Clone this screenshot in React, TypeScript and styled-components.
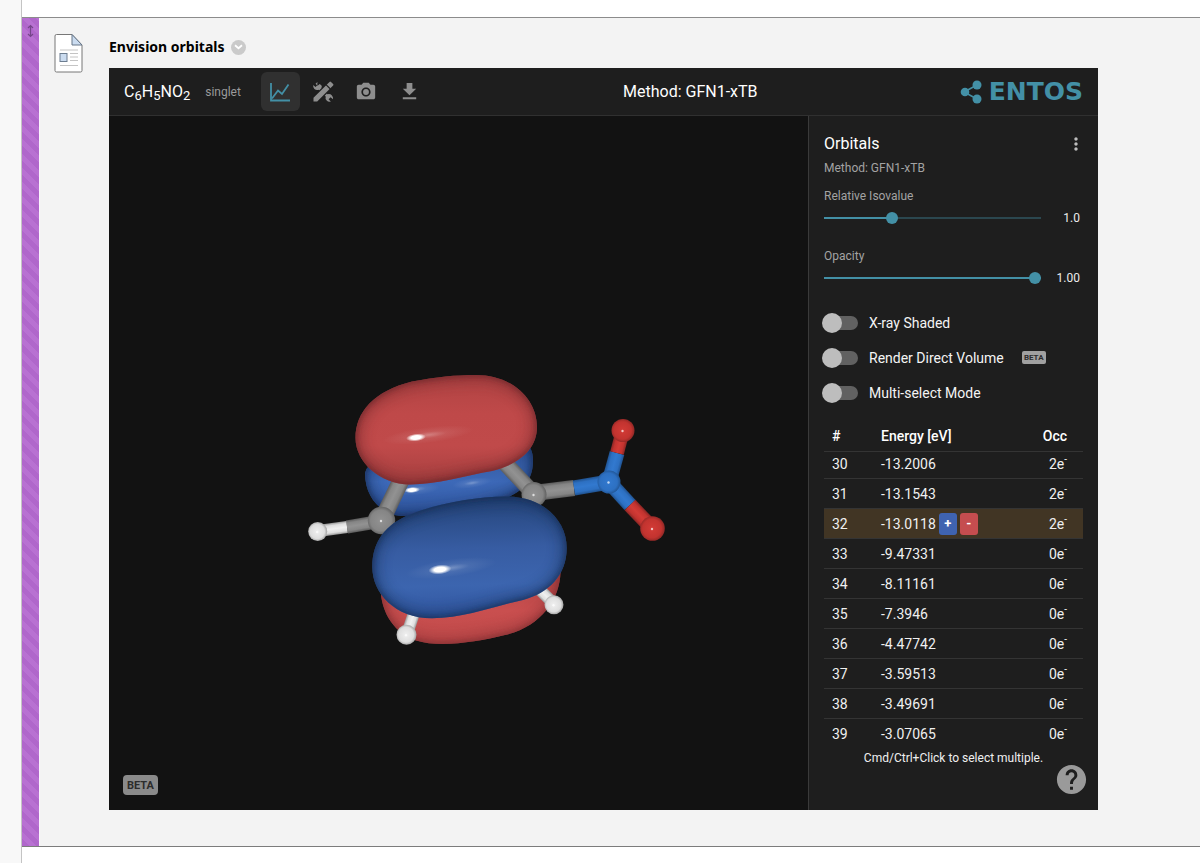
import React, { useState } from "react";
import styled, { createGlobalStyle } from "styled-components";
import { MdHelp, MdMoreVert, MdPhotoCamera, MdGetApp } from "react-icons/md";

const teal = "#4390a6";

const GlobalStyle = createGlobalStyle`
  *, *::before, *::after { box-sizing: border-box; }
  body { margin: 0; background: #fff; font-family: Roboto, "Liberation Sans", sans-serif; }
  button { font: inherit; border: 0; padding: 0; cursor: pointer; }
  h1, h2, p { margin: 0; }
`;

const Page = styled.div`
  display: flex;
  min-height: 100vh;
`;

const Gutter = styled.aside`
  flex: none;
  width: 22px;
  background: #f8f8f8;
  border-right: 1px solid #c4c4c4;
`;

const Notebook = styled.main`
  flex: 1;
  min-width: 0;
  padding: 17px 0 16px;
`;

const Entry = styled.article`
  display: flex;
  background: #f3f3f3;
  border-top: 1px solid #8c8c8c;
  border-bottom: 1px solid #7c7c7c;
`;

const DragHandle = styled.div`
  flex: none;
  width: 18px;
  padding: 6px 4px;
  border-right: 1px solid #fbf4fd;
  background: repeating-linear-gradient(45deg, #b067cb 0 5px, #b871d2 5px 10px);
  svg { display: block; }
`;

const EntryIcon = styled.div`
  flex: none;
  padding: 15px 26px 0 14px;
  svg { display: block; }
`;

const EntryBody = styled.section`
  flex: 1;
  min-width: 0;
  padding: 17px 102px 36px 0;
`;

const EntryHeader = styled.header`
  display: flex;
  align-items: center;
  gap: 6px;
  height: 24px;
  margin-bottom: 9px;
`;

const EntryTitle = styled.h1`
  font: 700 14px/24px "Noto Sans", "Open Sans", sans-serif;
  color: #000;
`;

const CollapseButton = styled.button`
  display: grid;
  place-items: center;
  width: 15px;
  height: 15px;
  border-radius: 50%;
  background: #cacaca;
`;

const App3D = styled.div`
  background: #1e1e1e;
  color: #fff;
`;

const Toolbar = styled.header`
  display: flex;
  align-items: center;
  justify-content: space-between;
  height: 48px;
  padding: 0 15px;
  border-bottom: 1px solid #303030;
`;

const ToolbarGroup = styled.div`
  display: flex;
  align-items: center;
`;

const Formula = styled.span`
  font-size: 16px;
  line-height: 24px;
  margin-right: 15px;
  sub { font-size: 13px; line-height: 0; vertical-align: -3px; }
`;

const SpinState = styled.span`
  font-size: 12px;
  color: #9a9a9a;
  margin-right: 20px;
`;

const Tools = styled.div`
  display: flex;
  gap: 4px;
`;

const ToolButton = styled.button<{ $active?: boolean }>`
  display: grid;
  place-items: center;
  width: 39px;
  height: 39px;
  border-radius: 6px;
  color: ${(p) => (p.$active ? teal : "#8e8e8e")};
  background: ${(p) => (p.$active ? "#303030" : "transparent")};
`;

const MethodTitle = styled.h2`
  margin-right: 8px;
  font-size: 16px;
  font-weight: 400;
  line-height: 24px;
`;

const Brand = styled.a`
  display: flex;
  align-items: center;
  gap: 7px;
  color: ${teal};
  text-decoration: none;
  font: 700 25px/24px "DejaVu Sans", sans-serif;
`;

const Workspace = styled.div`
  display: flex;
`;

const Viewport = styled.div`
  position: relative;
  flex: 1;
  min-width: 0;
  background: #121212;
`;

const Scene = styled.svg`
  display: block;
  width: 100%;
  height: 100%;
`;

const BetaBadge = styled.span<{ $large?: boolean }>`
  display: grid;
  place-items: center;
  width: ${(p) => (p.$large ? 35 : 24)}px;
  height: ${(p) => (p.$large ? 20 : 13)}px;
  border-radius: ${(p) => (p.$large ? 4 : 2)}px;
  background: ${(p) => (p.$large ? "#8a8a8a" : "#a0a0a0")};
  color: #2c2c2c;
  font-size: ${(p) => (p.$large ? 11 : 8)}px;
  font-weight: 700;
`;

const ViewportBadge = styled.div`
  position: absolute;
  left: 14px;
  bottom: 15px;
`;

const Sidebar = styled.aside`
  position: relative;
  flex: none;
  width: 290px;
  padding: 16px 15px 42px;
  border-left: 1px solid #3a3a3a;
`;

const SidebarHeader = styled.header`
  display: flex;
  align-items: center;
  justify-content: space-between;
`;

const PanelTitle = styled.h2`
  font-size: 16px;
  font-weight: 400;
  line-height: 24px;
`;

const MenuButton = styled.button`
  display: grid;
  place-items: center;
  width: 20px;
  height: 24px;
  margin-right: -3px;
  background: none;
  color: #bdbdbd;
`;

const Muted = styled.p`
  margin-top: 2px;
  font-size: 12px;
  line-height: 20px;
  color: #a3a3a3;
`;

const Sliders = styled.div`
  display: grid;
  gap: 16px;
  margin: 8px 0 15px;
`;

const SliderLabel = styled.label`
  display: block;
  font-size: 12px;
  line-height: 20px;
  color: #a3a3a3;
`;

const SliderRow = styled.div`
  display: flex;
  align-items: center;
  height: 24px;
  padding-right: 3px;
`;

const Range = styled.input`
  appearance: none;
  flex: 1;
  min-width: 0;
  height: 12px;
  margin: 0;
  background: linear-gradient(${teal}, ${teal}) 0 50% / var(--fill) 2px no-repeat,
    linear-gradient(#2b474f, #2b474f) 0 50% / 100% 2px no-repeat;
  &::-webkit-slider-thumb {
    appearance: none;
    width: 12px;
    height: 12px;
    border-radius: 50%;
    background: ${teal};
  }
`;

const SliderValue = styled.output`
  width: 39px;
  font-size: 12px;
  line-height: 20px;
  text-align: right;
  color: #ececec;
`;

const SwitchRow = styled.label`
  display: flex;
  align-items: center;
  height: 35px;
  font-size: 14px;
  color: #f4f4f4;
`;

const Switch = styled.input`
  appearance: none;
  position: relative;
  flex: none;
  width: 34px;
  height: 14px;
  margin: 0 11px 0 0;
  border-radius: 7px;
  background: #616161;
  &::before {
    content: "";
    position: absolute;
    top: -3px;
    left: -2px;
    width: 20px;
    height: 20px;
    border-radius: 50%;
    background: #bdbdbd;
  }
  &:checked { background: #2b5f6d; }
  &:checked::before { left: 16px; background: ${teal}; }
`;

const SwitchText = styled.span`
  margin-right: 18px;
`;

const TableScroll = styled.div`
  height: 323px;
  margin-top: 11px;
  overflow: hidden;
`;

const OrbitalTable = styled.table`
  width: 100%;
  border-collapse: separate;
  border-spacing: 0;
  font-size: 14px;
  line-height: 18px;
  color: #f0f0f0;
  th, td {
    padding: 0 8px 5px;
    text-align: left;
    vertical-align: bottom;
    border-bottom: 1px solid #343434;
  }
  th { height: 31px; padding-bottom: 6px; font-weight: 500; color: #fff; }
  th:first-child { width: 49px; }
  th:last-child, td:last-child { text-align: right; padding-right: 16px; }
  sup { font-size: 10px; line-height: 0; }
`;

const OrbitalRow = styled.tr<{ $selected: boolean }>`
  height: 30px;
  background: ${(p) => (p.$selected ? "#413524" : "transparent")};
  &:first-child { height: 27px; }
`;

const EnergyCell = styled.div`
  display: flex;
  align-items: center;
  gap: 3px;
  height: 18px;
`;

const PhaseButton = styled.button<{ $color: string }>`
  flex: none;
  width: 18px;
  height: 22px;
  border-radius: 3px;
  background: ${(p) => p.$color};
  color: #fff;
  font-size: 13px;
  font-weight: 700;
  line-height: 20px;
`;

const Hint = styled.p`
  margin-top: 4px;
  font-size: 12px;
  line-height: 20px;
  text-align: center;
  color: #f0f0f0;
`;

const HelpButton = styled.button`
  position: absolute;
  right: 9px;
  bottom: 13px;
  width: 35px;
  height: 35px;
  background: none;
  color: #9a9a9a;
  svg { display: block; }
`;

const ORBITALS = [
  { n: 30, energy: "-13.2006", occ: 2 },
  { n: 31, energy: "-13.1543", occ: 2 },
  { n: 32, energy: "-13.0118", occ: 2 },
  { n: 33, energy: "-9.47331", occ: 0 },
  { n: 34, energy: "-8.11161", occ: 0 },
  { n: 35, energy: "-7.3946", occ: 0 },
  { n: 36, energy: "-4.47742", occ: 0 },
  { n: 37, energy: "-3.59513", occ: 0 },
  { n: 38, energy: "-3.49691", occ: 0 },
  { n: 39, energy: "-3.07065", occ: 0 },
];

function DocumentIcon() {
  return (
    <svg width="29" height="40" viewBox="0 0 29 40" aria-hidden="true">
      <path d="M2.500 1.500H18L28 12v25.500q0 1.500-1.500 1.500h-24Q1 39 1 37.500V3Q1 1.500 2.500 1.500Z" fill="#fff" stroke="#777" />
      <path d="M18 1.500V12H28Z" fill="#cbdcf0" stroke="#667689" strokeLinejoin="round" />
      <path d="M6 17h18M16 20.500h8M16 24h8M16 27.500h8M6 32.500h18" stroke="#c4c4c4" />
      <rect x="6" y="20.500" width="7" height="8" fill="#cbdcf0" stroke="#6c7d90" />
    </svg>
  );
}

function ChartIcon() {
  return (
    <svg width="22" height="22" viewBox="0 0 22 22" fill="none" stroke="currentColor" strokeWidth="1.800" aria-hidden="true">
      <path d="M2 2v17.500h19" />
      <path d="M3 17.500L9 9.500l4 3.500L19.500 3.500" />
    </svg>
  );
}

function BuildIcon() {
  return (
    <svg width="22" height="22" viewBox="0 0 22 22" fill="currentColor" aria-hidden="true">
      <path d="M5.400 1L3.600 2.800l1.900 2L7.800 3l2.100 2.100-.5 1.500 2 2L9 11 6.700 8.700Q4.300 9.600 2.400 7.900.8 6.300 1.200 4L3.500 5.900 5.300 4.200Z" />
      <path d="M13 10.800l2.500 2.500q2.600-.7 4.200.9Q21.500 16 21 18.200l-2.400-2-2 2 2.200 2.400q-2.400.7-4.100-1-1.700-1.700-1-4.100l-2.500-2.500Z" />
      <path d="M1.500 20.500v-3.700L17.500.9q.7-.7 1.500 0l2.100 2.100q.8.800 0 1.600L5.200 20.500Z" stroke="#1e1e1e" strokeWidth="2.400" paintOrder="stroke" />
      <path d="M14 3.600l4.400 4.400" stroke="#1e1e1e" strokeWidth="1.200" />
    </svg>
  );
}

function BrandMark() {
  return (
    <svg width="22" height="24" viewBox="0 0 22 24" fill="currentColor" aria-hidden="true">
      <path d="M4 12L17 5M4 12l13 7" stroke="currentColor" strokeWidth="1.500" />
      <circle cx="5" cy="12" r="4.300" />
      <circle cx="17" cy="5" r="4.500" />
      <circle cx="17" cy="19" r="4.500" />
    </svg>
  );
}

type Pt = [number, number];

function Bond({ from, to, width, tone }: { from: Pt; to: Pt; width: number; tone: string }) {
  const dx = to[0] - from[0];
  const dy = to[1] - from[1];
  const length = Math.hypot(dx, dy);
  const angle = (Math.atan2(dy, dx) * 180) / Math.PI;
  return (
    <rect
      y={-width / 2}
      width={length}
      height={width}
      fill={`url(#bond-${tone})`}
      transform={`translate(${from[0]} ${from[1]}) rotate(${angle})`}
    />
  );
}

function Atom({ at, r, tone }: { at: Pt; r: number; tone: string }) {
  return (
    <g>
      <circle cx={at[0]} cy={at[1]} r={r} fill={`url(#atom-${tone})`} />
      <circle cx={at[0] - 0.5} cy={at[1] + 0.5} r="1.200" fill="#fff" opacity=".7" />
    </g>
  );
}

/* An isosurface lobe: a lit body whose rim darkens along its own outline. */
function Lobe({ id, d, fill, rim }: { id: string; d: string; fill: string; rim: string }) {
  return (
    <g>
      <clipPath id={`clip-${id}`}><path d={d} /></clipPath>
      <path d={d} fill={fill} />
      <g clipPath={`url(#clip-${id})`}>
        <path d={d} fill="none" stroke={rim} strokeWidth="16" opacity=".36" filter="url(#soft-wide)" />
        <path d={d} fill="none" stroke={rim} strokeWidth="4" opacity=".75" filter="url(#soft)" />
      </g>
    </g>
  );
}

const TONES: Record<string, [string, string, string]> = {
  carbon: ["#929292", "#858585", "#5c5c5c"],
  hydrogen: ["#f0f0f0", "#dedede", "#989898"],
  nitrogen: ["#3279cf", "#2d70c2", "#20528f"],
  oxygen: ["#d33b36", "#c2332f", "#892624"],
};

function Molecule() {
  return (
    <Scene viewBox="109 116 699 694" preserveAspectRatio="xMidYMid slice" role="img" aria-label="Nitrobenzene orbital 32">
      <defs>
        {Object.entries(TONES).map(([name, [light, mid, dark]]) => (
          <React.Fragment key={name}>
            <radialGradient id={`atom-${name}`} cx=".48" cy=".5" r=".54">
              <stop offset="0" stopColor={light} />
              <stop offset=".7" stopColor={mid} />
              <stop offset="1" stopColor={dark} />
            </radialGradient>
            <linearGradient id={`bond-${name}`} x1="0" y1="0" x2="0" y2="1">
              <stop offset="0" stopColor={dark} />
              <stop offset=".2" stopColor={mid} />
              <stop offset=".5" stopColor={light} />
              <stop offset=".8" stopColor={mid} />
              <stop offset="1" stopColor={dark} />
            </linearGradient>
          </React.Fragment>
        ))}
        <filter id="soft" x="-20%" y="-20%" width="140%" height="140%"><feGaussianBlur stdDeviation="2" /></filter>
        <filter id="soft-wide" x="-20%" y="-20%" width="140%" height="140%"><feGaussianBlur stdDeviation="6" /></filter>
        <linearGradient id="lobe-red" x1="0" y1="0" x2="0" y2="1">
          <stop offset="0" stopColor="#b04343" />
          <stop offset=".35" stopColor="#bf4949" />
          <stop offset=".65" stopColor="#c04a4a" />
          <stop offset="1" stopColor="#a53f3f" />
        </linearGradient>
        <linearGradient id="lobe-blue" x1="0" y1="0" x2=".05" y2="1">
          <stop offset="0" stopColor="#213e70" />
          <stop offset=".2" stopColor="#2c4e8a" />
          <stop offset=".45" stopColor="#375ca2" />
          <stop offset=".75" stopColor="#3c65af" />
          <stop offset="1" stopColor="#3156a0" />
        </linearGradient>
        <linearGradient id="lobe-blue-back" x1="0" y1="0" x2="0" y2="1">
          <stop offset="0" stopColor="#2c4f91" />
          <stop offset=".55" stopColor="#3d69b8" />
          <stop offset="1" stopColor="#3056a0" />
        </linearGradient>
        <linearGradient id="lobe-red-back" x1="0" y1="0" x2="0" y2="1">
          <stop offset="0" stopColor="#a84040" />
          <stop offset=".6" stopColor="#c94f4f" />
          <stop offset="1" stopColor="#c04a4a" />
        </linearGradient>
        <radialGradient id="glow">
          <stop offset="0" stopColor="#fff" stopOpacity=".3" />
          <stop offset=".4" stopColor="#fff" stopOpacity=".08" />
          <stop offset="1" stopColor="#fff" stopOpacity="0" />
        </radialGradient>
        <radialGradient id="glint">
          <stop offset="0" stopColor="#fff" />
          <stop offset=".5" stopColor="#fff" />
          <stop offset="1" stopColor="#fff" stopOpacity="0" />
        </radialGradient>
      </defs>

      <Lobe
        id="blue-back"
        d="M365 473C365 500 384 515 401 516C440 514 476 510 506 498C527 490 533 475 533 461C533 451 530 446 524 440L380 460Q366 465 365 473Z"
        fill="url(#lobe-blue-back)"
        rim="#162b54"
      />
      <ellipse cx="416" cy="489" rx="24" ry="6" transform="rotate(-4 416 489)" fill="url(#glow)" />
      <ellipse cx="412" cy="490" rx="8" ry="3" transform="rotate(-4 412 490)" fill="url(#glint)" />
      <ellipse cx="472" cy="483" rx="20" ry="5" transform="rotate(-8 472 483)" fill="url(#glow)" />

      <Bond from={[382, 520]} to={[405, 472]} width={17} tone="carbon" />
      <Bond from={[534, 494]} to={[503, 461]} width={16} tone="carbon" />
      <Bond from={[534, 493]} to={[574, 488]} width={16} tone="carbon" />
      <Bond from={[574, 488]} to={[609, 482]} width={15} tone="nitrogen" />
      <Bond from={[609, 482]} to={[617, 453]} width={15} tone="nitrogen" />
      <Bond from={[617, 453]} to={[623, 430]} width={14} tone="oxygen" />
      <Bond from={[609, 482]} to={[630, 505]} width={15} tone="nitrogen" />
      <Bond from={[630, 505]} to={[652, 528]} width={15} tone="oxygen" />
      <Bond from={[382, 521]} to={[347, 527]} width={13} tone="carbon" />
      <Bond from={[347, 527]} to={[318, 531]} width={12} tone="hydrogen" />
      <Atom at={[381.500, 520.500]} r={13.700} tone="carbon" />
      <Atom at={[534, 494.500]} r={12.500} tone="carbon" />
      <Atom at={[609, 482]} r={11.500} tone="nitrogen" />
      <Atom at={[623, 430.500]} r={11.500} tone="oxygen" />
      <Atom at={[652.500, 528.500]} r={12.300} tone="oxygen" />
      <Atom at={[317.700, 531.500]} r={9.500} tone="hydrogen" />

      <Lobe
        id="red-front"
        d="M355.500 438C355.500 412 374 391 412 381.500C437 377 455 375 476 375C512 375 537 399 537 427C537 449 519 464.500 492 471C466 475.500 436 484.500 410 484.500C380 484.500 355.500 462 355.500 438Z"
        fill="url(#lobe-red)"
        rim="#6a2829"
      />
      <ellipse cx="428" cy="435" rx="46" ry="8" transform="rotate(-7 428 435)" fill="url(#glow)" />
      <ellipse cx="416" cy="437.500" rx="10" ry="3.800" transform="rotate(-6 416 437.500)" fill="url(#glint)" />

      <Lobe
        id="red-back"
        d="M380.500 585C380 614 396 634 416 640.500C440 648 476 642 505 635C540 627 560 600 560.500 572L500 560Z"
        fill="url(#lobe-red-back)"
        rim="#812f30"
      />
      <Bond from={[407, 634]} to={[415, 610]} width={12} tone="hydrogen" />
      <Bond from={[554, 604]} to={[540, 590]} width={12} tone="hydrogen" />
      <Lobe
        id="blue-front"
        d="M372.300 567C372.300 541 386 524 410 514.500C436 504 474 496.500 506 496.500C543 496.500 566.700 520 566.700 548C566.700 575 549 593 523 600C496 605.500 464 618.300 432 618.300C395 618.300 372.300 593 372.300 567Z"
        fill="url(#lobe-blue)"
        rim="#182d54"
      />
      <ellipse cx="451" cy="568" rx="46" ry="9" transform="rotate(-8 451 568)" fill="url(#glow)" />
      <ellipse cx="440" cy="569.500" rx="11.500" ry="4.800" transform="rotate(-6 440 569.500)" fill="url(#glint)" />
      <Atom at={[406.500, 634.700]} r={10} tone="hydrogen" />
      <Atom at={[554, 604.700]} r={9.500} tone="hydrogen" />
    </Scene>
  );
}

interface SliderProps {
  id: string;
  label: string;
  min: number;
  max: number;
  step: number;
  initial: number;
  digits: number;
}

function Slider({ id, label, min, max, step, initial, digits }: SliderProps) {
  const [value, setValue] = useState(initial);
  const fill = `${((value - min) / (max - min)) * 100}%`;
  return (
    <div>
      <SliderLabel htmlFor={id}>{label}</SliderLabel>
      <SliderRow>
        <Range
          id={id}
          type="range"
          min={min}
          max={max}
          step={step}
          value={value}
          onChange={(e) => setValue(Number(e.target.value))}
          style={{ "--fill": fill } as React.CSSProperties}
        />
        <SliderValue htmlFor={id}>{value.toFixed(digits)}</SliderValue>
      </SliderRow>
    </div>
  );
}

function OrbitalsPanel() {
  const [selected, setSelected] = useState(32);
  return (
    <Sidebar>
      <SidebarHeader>
        <PanelTitle>Orbitals</PanelTitle>
        <MenuButton aria-label="More options"><MdMoreVert size={20} /></MenuButton>
      </SidebarHeader>
      <Muted>Method: GFN1-xTB</Muted>
      <Sliders>
        <Slider id="isovalue" label="Relative Isovalue" min={0.1} max={3.1} step={0.1} initial={1} digits={1} />
        <Slider id="opacity" label="Opacity" min={0} max={1} step={0.01} initial={1} digits={2} />
      </Sliders>
      <SwitchRow><Switch type="checkbox" /><SwitchText>X-ray Shaded</SwitchText></SwitchRow>
      <SwitchRow><Switch type="checkbox" /><SwitchText>Render Direct Volume</SwitchText><BetaBadge>BETA</BetaBadge></SwitchRow>
      <SwitchRow><Switch type="checkbox" /><SwitchText>Multi-select Mode</SwitchText></SwitchRow>
      <TableScroll>
        <OrbitalTable>
          <thead>
            <tr><th>#</th><th>Energy [eV]</th><th>Occ</th></tr>
          </thead>
          <tbody>
            {ORBITALS.map((o) => (
              <OrbitalRow key={o.n} $selected={o.n === selected} onClick={() => setSelected(o.n)}>
                <td>{o.n}</td>
                <td>
                  <EnergyCell>
                    {o.energy}
                    {o.n === selected && (
                      <>
                        <PhaseButton $color="#3f63b0" aria-label="Positive phase">+</PhaseButton>
                        <PhaseButton $color="#c54d4f" aria-label="Negative phase">-</PhaseButton>
                      </>
                    )}
                  </EnergyCell>
                </td>
                <td>{o.occ}e<sup>-</sup></td>
              </OrbitalRow>
            ))}
          </tbody>
        </OrbitalTable>
      </TableScroll>
      <Hint>Cmd/Ctrl+Click to select multiple.</Hint>
      <HelpButton aria-label="Help"><MdHelp size={35} /></HelpButton>
    </Sidebar>
  );
}

export default function App() {
  return (
    <Page>
      <GlobalStyle />
      <Gutter />
      <Notebook>
        <Entry>
          <DragHandle>
            <svg width="9" height="14" viewBox="0 0 9 14" fill="none" stroke="#75458a" strokeWidth="1.200" aria-hidden="true">
              <path d="M4.500 1.500v11M2 4l2.500-2.500L7 4M2 10l2.500 2.500L7 10" />
            </svg>
          </DragHandle>
          <EntryIcon><DocumentIcon /></EntryIcon>
          <EntryBody>
            <EntryHeader>
              <EntryTitle>Envision orbitals</EntryTitle>
              <CollapseButton aria-label="Entry options">
                <svg width="9" height="6" viewBox="0 0 9 6" fill="none" stroke="#fff" strokeWidth="1.800" aria-hidden="true">
                  <path d="M1 1.200l3.500 3 3.500-3" />
                </svg>
              </CollapseButton>
            </EntryHeader>
            <App3D>
              <Toolbar>
                <ToolbarGroup>
                  <Formula>C<sub>6</sub>H<sub>5</sub>NO<sub>2</sub></Formula>
                  <SpinState>singlet</SpinState>
                  <Tools>
                    <ToolButton $active aria-label="Analysis"><ChartIcon /></ToolButton>
                    <ToolButton aria-label="Build"><BuildIcon /></ToolButton>
                    <ToolButton aria-label="Take picture"><MdPhotoCamera size={22} /></ToolButton>
                    <ToolButton aria-label="Download"><MdGetApp size={23} /></ToolButton>
                  </Tools>
                </ToolbarGroup>
                <MethodTitle>Method: GFN1-xTB</MethodTitle>
                <Brand href="#"><BrandMark />ENTOS</Brand>
              </Toolbar>
              <Workspace>
                <Viewport>
                  <Molecule />
                  <ViewportBadge><BetaBadge $large>BETA</BetaBadge></ViewportBadge>
                </Viewport>
                <OrbitalsPanel />
              </Workspace>
            </App3D>
          </EntryBody>
        </Entry>
      </Notebook>
    </Page>
  );
}
